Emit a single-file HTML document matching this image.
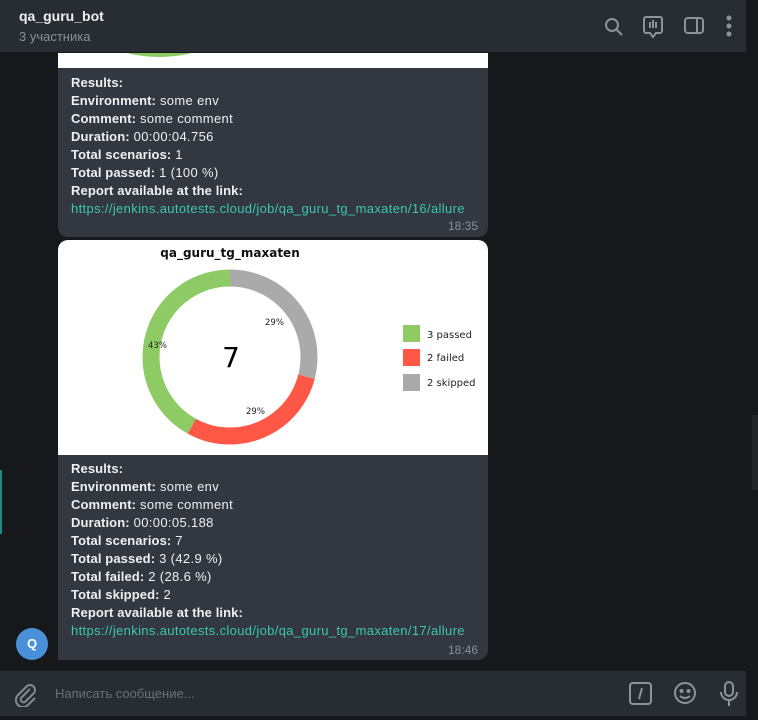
<!DOCTYPE html>
<html><head><meta charset="utf-8"><style>
*{margin:0;padding:0;box-sizing:border-box}
body{width:758px;height:720px;background:#17181c;font-family:"Liberation Sans",sans-serif;position:relative;overflow:hidden;color:#e9e9ea}
.hdr{position:absolute;left:0;top:0;width:746px;height:52px;background:#282c33}
.t1{position:absolute;left:19px;top:8px;font-size:14px;font-weight:bold;color:#f0f0f0}
.t2{position:absolute;left:19px;top:29px;font-size:13px;color:#8b8f96}
.bub{position:absolute;left:58px;width:430px;background:#33373f;border-radius:10px;overflow:hidden}
.txt{position:absolute;left:13px;font-size:13px;line-height:18px;color:#eef0f2;white-space:nowrap;letter-spacing:0.35px}
.txt b{font-weight:bold;letter-spacing:0.1px}
.lnk{color:#3bc7b3}
.time{position:absolute;right:10px;font-size:12px;color:#8b9098}
.inp{position:absolute;left:0;top:671px;width:746px;height:45px;background:#282c33}
</style></head><body>
<div class="hdr">
<div class="t1">qa_guru_bot</div>
<div class="t2">3 участника</div>
<svg style="position:absolute;left:600px;top:14px" width="140" height="26" fill="none" stroke="#8e939b" stroke-width="2">
<circle cx="12" cy="11" r="6"/><path d="M16.5 15.5 L22 21"/>
<path d="M46 3h14a2 2 0 0 1 2 2v12a2 2 0 0 1-2 2h-4l-3 4-3-4h-4a2 2 0 0 1-2-2V5a2 2 0 0 1 2-2z"/><path d="M50 8v6M53 6v8M56 8v6"/>
<rect x="85" y="4" width="18" height="15" rx="3"/><path d="M97 4v15"/>
<circle cx="129" cy="4" r="1.5" fill="#8e939b"/><circle cx="129" cy="12" r="1.5" fill="#8e939b"/><circle cx="129" cy="20" r="1.5" fill="#8e939b"/>
</svg>
</div>
<div class="bub" style="top:53px;height:184px;border-radius:0 0 10px 10px">
<svg style="position:absolute;left:0;top:0" width="430" height="15"><rect width="430" height="15" fill="#fff"/><path d="M69 0 Q101 8 134 0 Z" fill="#8fcb64"/></svg>
<div class="txt" style="top:21px"><b>Results:</b><br><b>Environment:</b> some env<br><b>Comment:</b> some comment<br><b>Duration:</b> 00:00:04.756<br><b>Total scenarios:</b> 1<br><b>Total passed:</b> 1 (100 %)<br><b>Report available at the link:</b><br><span class="lnk">https://jenkins.autotests.cloud/job/qa_guru_tg_maxaten/16/allure</span></div>
<div class="time" style="top:166px">18:35</div>
</div>
<div class="bub" style="top:240px;height:420px;border-radius:10px 10px 10px 0">
<svg style="position:absolute;left:0;top:0" width="430" height="215">
<rect width="430" height="215" fill="#fff"/>
<text x="172" y="17" text-anchor="middle" font-family="DejaVu Sans" font-weight="bold" font-size="12" fill="#111">qa_guru_tg_maxaten</text>
<g transform="rotate(-90 172 117)" fill="none" stroke-width="17">
<circle cx="172" cy="117" r="79" stroke="#aaaaaa" stroke-dasharray="144 600"/>
<circle cx="172" cy="117" r="79" stroke="#fe5745" stroke-dasharray="144 600" stroke-dashoffset="-144"/>
<circle cx="172" cy="117" r="79" stroke="#8fcb64" stroke-dasharray="208.4 600" stroke-dashoffset="-288"/>
</g>
<text x="173" y="127" text-anchor="middle" font-family="DejaVu Sans" font-size="28" fill="#000">7</text>
<g font-family="DejaVu Sans" font-size="8.5" fill="#222">
<text x="90" y="108">43%</text><text x="207" y="85">29%</text><text x="188" y="174">29%</text>
</g>
<rect x="345" y="85" width="17" height="17" fill="#8fcb64"/>
<rect x="345" y="109" width="17" height="17" fill="#fe5745"/>
<rect x="345" y="134" width="17" height="17" fill="#aaaaaa"/>
<g font-family="DejaVu Sans" font-size="10" fill="#222">
<text x="369" y="98">3 passed</text><text x="369" y="121">2 failed</text><text x="369" y="146">2 skipped</text>
</g>
</svg>
<div class="txt" style="top:220px"><b>Results:</b><br><b>Environment:</b> some env<br><b>Comment:</b> some comment<br><b>Duration:</b> 00:00:05.188<br><b>Total scenarios:</b> 7<br><b>Total passed:</b> 3 (42.9 %)<br><b>Total failed:</b> 2 (28.6 %)<br><b>Total skipped:</b> 2<br><b>Report available at the link:</b><br><span class="lnk">https://jenkins.autotests.cloud/job/qa_guru_tg_maxaten/17/allure</span></div>
<div class="time" style="top:403px">18:46</div>
</div>
<div style="position:absolute;left:16px;top:628px;width:32px;height:32px;border-radius:50%;background:#4a90d9;color:#fff;font-weight:bold;font-size:13px;text-align:center;line-height:32px">Q</div>
<div style="position:absolute;left:0;top:470px;width:2px;height:64px;background:#1f8a84"></div>
<div style="position:absolute;left:752px;top:415px;width:6px;height:75px;background:#222428"></div>
<div class="inp">
<svg style="position:absolute;left:12px;top:10px" width="26" height="26" fill="none" stroke="#858a91" stroke-width="2"><path d="M18 8l-9 9a3 3 0 0 0 4 4l9-9a5 5 0 0 0-7-7l-9 9a7 7 0 0 0 10 10l7-7"/></svg>
<div style="position:absolute;left:55px;top:15px;font-size:13px;color:#6c7078">Написать сообщение...</div>
<svg style="position:absolute;left:625px;top:8px" width="120" height="30" fill="none" stroke="#8e939b" stroke-width="2">
<rect x="5" y="4" width="21" height="21" rx="3"/><path d="M17 9l-3 11"/>
<circle cx="60" cy="14" r="10"/><circle cx="56.5" cy="12" r="1" fill="#8e939b"/><circle cx="63.5" cy="12" r="1" fill="#8e939b"/><path d="M55 17q5 4 10 0"/>
<rect x="100" y="3" width="8" height="14" rx="4"/><path d="M96 13a8 8 0 0 0 16 0M104 21v6"/>
</svg>
</div>
</body></html>
